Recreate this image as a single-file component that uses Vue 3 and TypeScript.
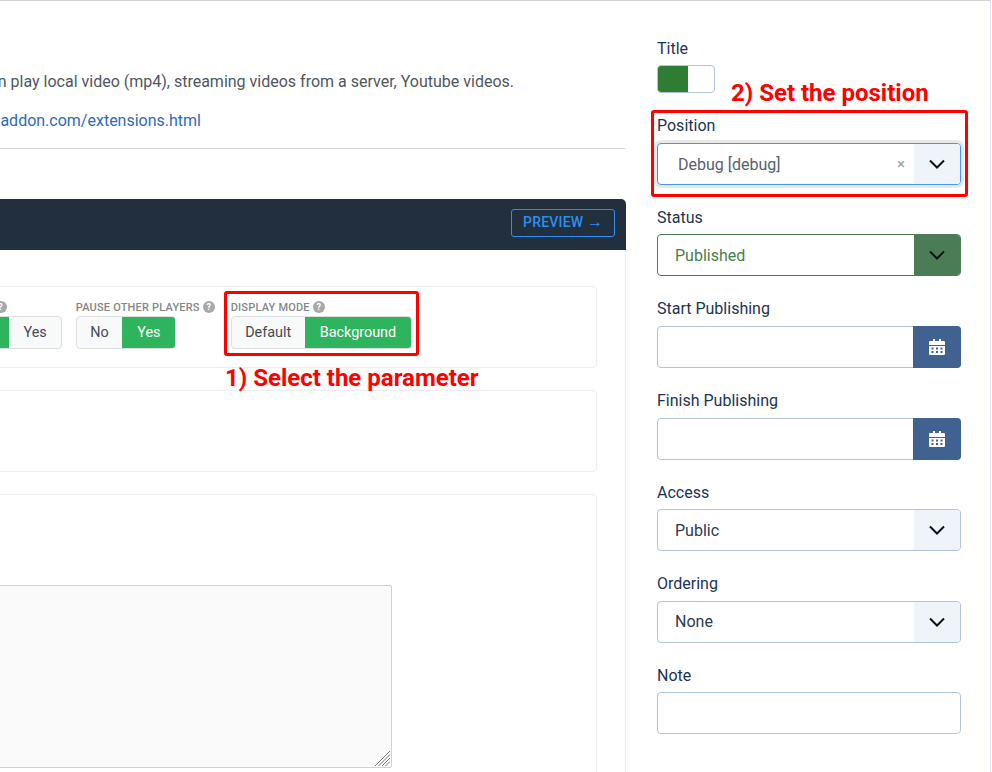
<script setup lang="ts">
interface Field { label: string; kind: 'select' | 'date' | 'text'; value?: string }
const lower: Field[] = [
  { label: 'Start Publishing', kind: 'date' },
  { label: 'Finish Publishing', kind: 'date' },
  { label: 'Access', kind: 'select', value: 'Public' },
  { label: 'Ordering', kind: 'select', value: 'None' },
  { label: 'Note', kind: 'text' },
]
const calendar = 'M4 0h2v2h4V0h2v2h3a1 1 0 0 1 1 1v3H0V3a1 1 0 0 1 1-1h3V0ZM0 7h16v8a1 1 0 0 1-1 1H1a1 1 0 0 1-1-1V7Zm2.5 1.5v2h2v-2h-2Zm4.5 0v2h2v-2H7Zm4.500 0v2h2v-2h-2Zm-9 3.500v2h2v-2h-2Zm4.500 0v2h2v-2H7Zm4.500 0v2h2v-2h-2Z'
</script>

<template>
  <div class="page">
    <main class="main">
      <div class="intro">
        <p class="line">This module can play local video (mp4), streaming videos from a server, Youtube videos.</p>
      </div>
      <div class="intro second">
        <a class="line link">https://www.joomaddon.com/extensions.html</a>
      </div>
      <hr class="rule" />

      <section class="panel">
        <header class="bar">
          <span class="preview">PREVIEW <span class="arrow">→</span></span>
        </header>
        <div class="panel-body">
          <div class="card params">
            <div class="param">
              <div class="param-label">LOOP <span class="help">?</span></div>
              <div class="group">
                <span class="opt on no">No</span>
                <span class="opt tight">Yes</span>
              </div>
            </div>
            <div class="param">
              <div class="param-label">PAUSE OTHER PLAYERS <span class="help">?</span></div>
              <div class="group">
                <span class="opt no">No</span>
                <span class="opt on">Yes</span>
              </div>
            </div>
            <div class="param">
              <div class="param-label">DISPLAY MODE <span class="help">?</span></div>
              <div class="group">
                <span class="opt default">Default</span>
                <span class="opt on">Background</span>
              </div>
            </div>
          </div>
          <div class="card empty"></div>
          <div class="card tall">
            <div class="area-wrap">
              <textarea class="area" readonly></textarea>
              <svg class="grip" width="15" height="15" viewBox="0 0 15 15">
                <path d="M0 15 15 0M3.500 15 15 3.500M7 15 15 7M10.500 15 15 10.500" fill="none" stroke="#777" stroke-width="1" />
              </svg>
            </div>
          </div>
        </div>
      </section>
    </main>

    <aside class="side">
      <div class="field">
        <label class="label">Title</label>
        <div class="toggle"><span class="toggle-on"></span></div>
      </div>
      <div class="field">
        <label class="label">Position</label>
        <div class="control focus">
          <span class="value position">Debug [debug]</span>
          <span class="clear">×</span>
          <span class="addon">
            <svg width="16" height="10" viewBox="0 0 16 10"><path d="M1 1.500 8 8.500 15 1.500" fill="none" stroke="#111" stroke-width="2" /></svg>
          </span>
        </div>
      </div>
      <div class="field">
        <label class="label">Status</label>
        <div class="control published">
          <span class="value">Published</span>
          <span class="addon">
            <svg width="16" height="10" viewBox="0 0 16 10"><path d="M1 1.500 8 8.500 15 1.500" fill="none" stroke="#111" stroke-width="2" /></svg>
          </span>
        </div>
      </div>
      <div v-for="f in lower" :key="f.label" class="field">
        <label class="label">{{ f.label }}</label>
        <div class="control">
          <span class="value dark">{{ f.value }}</span>
          <span v-if="f.kind === 'select'" class="addon">
            <svg width="16" height="10" viewBox="0 0 16 10"><path d="M1 1.500 8 8.500 15 1.500" fill="none" stroke="#111" stroke-width="2" /></svg>
          </span>
          <span v-else-if="f.kind === 'date'" class="addon cal">
            <svg width="16" height="16" viewBox="0 0 16 16"><path :d="calendar" fill="#fff" fill-rule="evenodd" /></svg>
          </span>
        </div>
      </div>
    </aside>

    <div class="mark box-one"></div>
    <div class="mark box-two"></div>
    <div class="note note-one">1) Select the parameter</div>
    <div class="note note-two">2) Set the position</div>
  </div>
</template>

<style scoped>
.page {
  position: relative;
  box-sizing: border-box;
  width: 991px;
  height: 772px;
  overflow: hidden;
  display: flex;
  background: #fff;
  border-top: 1px solid #d3d5d9;
  border-right: 1px solid #e0e4ec;
  font-family: Roboto, "Liberation Sans", sans-serif;
  font-size: 16px;
}
.main {
  width: 626px;
  flex: none;
  overflow: hidden;
  padding-top: 69px;
  box-sizing: border-box;
}
.intro {
  width: 514px;
  height: 24px;
  display: flex;
  justify-content: flex-end;
  white-space: nowrap;
}
.second {
  width: 201px;
  margin-top: 15px;
}
.line {
  margin: 0;
  flex: none;
  line-height: 24px;
  color: #4f5660;
}
.link {
  color: #2f69b8;
}
.rule {
  margin: 15px 0 0;
  width: 625px;
  border: 0;
  border-top: 1px solid #d2d2d2;
}
.panel {
  margin-top: 50px;
}
.bar {
  box-sizing: border-box;
  height: 51px;
  background: #212f3e;
  border-top-right-radius: 5px;
  display: flex;
  align-items: center;
  justify-content: flex-end;
  padding: 0 11px 3px 0;
}
.preview {
  box-sizing: border-box;
  width: 104px;
  height: 28px;
  border: 1px solid #2b8ff0;
  border-radius: 3px;
  color: #2b8ff0;
  font-size: 14px;
  font-weight: 500;
  letter-spacing: 0.2px;
  line-height: 25px;
  text-align: center;
  white-space: nowrap;
}
.arrow {
  font-size: 16px;
  line-height: 20px;
  letter-spacing: 0;
}
.panel-body {
  border-right: 1px solid #ececec;
  padding: 36px 28px 0 0;
  margin-left: -300px;
  display: flex;
  flex-direction: column;
  gap: 22px;
}
.card {
  box-sizing: border-box;
  border: 1px solid #ececee;
  border-radius: 4px;
  height: 82px;
}
.params {
  display: flex;
  gap: 14px;
  padding: 14px 0 0 262px;
}
.param + .param + .param {
  margin-left: 2px;
}
.param-label {
  height: 15px;
  font-size: 11px;
  font-weight: 500;
  letter-spacing: 0.2px;
  line-height: 13px;
  color: #868686;
  white-space: nowrap;
}
.help {
  display: inline-block;
  width: 12px;
  height: 12px;
  border-radius: 50%;
  background: #a8a8a8;
  color: #fff;
  font-size: 9px;
  font-weight: 700;
  letter-spacing: 0;
  line-height: 12px;
  text-align: center;
  vertical-align: top;
}
.group {
  display: flex;
  width: fit-content;
  height: 33px;
  box-sizing: border-box;
  border: 1px solid #dcdfe1;
  border-radius: 4px;
  overflow: hidden;
  background: #f8f9f9;
}
.opt {
  padding: 0 15px;
  font-size: 14.400px;
  line-height: 31px;
  color: #444b55;
}
.opt.no {
  padding: 0 13.500px;
}
.opt.tight {
  padding: 0 14px;
}
.opt.default {
  padding: 0 13.500px;
}
.opt.on {
  background: #2fb45e;
  color: #fff;
}
.tall {
  height: 400px;
  padding-top: 90px;
}
.area-wrap {
  position: relative;
  width: 691px;
  height: 183px;
}
.area {
  display: block;
  box-sizing: border-box;
  width: 100%;
  height: 100%;
  margin: 0;
  background: #fafafa;
  border: 1px solid #cfd2d2;
  border-radius: 2px;
  outline: none;
  resize: none;
}
.grip {
  position: absolute;
  right: 2px;
  bottom: 2px;
}
.side {
  width: 304px;
  flex: none;
  margin-left: 31px;
  padding-top: 34.600px;
}
.field {
  margin-bottom: 20px;
}
.label {
  display: block;
  margin-bottom: 3.600px;
  line-height: 26px;
  color: #1c3353;
}
.toggle {
  box-sizing: border-box;
  width: 58px;
  height: 28px;
  border: 1px solid #b0c4dc;
  border-radius: 4px;
  overflow: hidden;
}
.toggle-on {
  display: block;
  width: 30px;
  height: 100%;
  background: #2e7d32;
}
.control {
  position: relative;
  box-sizing: border-box;
  height: 42px;
  display: flex;
  align-items: center;
  border: 1px solid #b2c4dc;
  border-radius: 4px;
  background: #fff;
}
.value {
  flex: 1;
  padding-left: 17px;
  color: #4a7d4a;
}
.value.dark {
  color: #2a3a50;
}
.value.position {
  padding: 1px 0 0 20px;
  color: #58606e;
}
.clear {
  margin-right: 9px;
  color: #9aa0a6;
  font-size: 15px;
}
.addon {
  flex: none;
  box-sizing: border-box;
  width: 46px;
  height: 100%;
  display: flex;
  align-items: center;
  justify-content: center;
  background: #eff4fb;
  border-radius: 0 3px 3px 0;
}
.cal {
  width: 48px;
  height: 42px;
  margin-right: -1px;
  background: #3f6290;
  border-radius: 0 4px 4px 0;
}
.focus {
  border-color: #3f97f0;
  box-shadow: 0 0 0 3px #e9e9e9;
}
.published {
  border-color: #4a7d56;
}
.published .addon {
  background: #4a7d56;
}
.mark {
  position: absolute;
  box-sizing: border-box;
  border: 3px solid #ff0000;
  border-radius: 3px;
}
.box-one {
  left: 224px;
  top: 290px;
  width: 195px;
  height: 65px;
}
.box-two {
  left: 651px;
  top: 109px;
  width: 317px;
  height: 87px;
}
.note {
  position: absolute;
  color: #ff0000;
  font-size: 24px;
  font-weight: 700;
  line-height: 28px;
  white-space: nowrap;
}
.note-one {
  left: 225px;
  top: 363px;
}
.note-two {
  left: 731px;
  top: 78px;
}
</style>
